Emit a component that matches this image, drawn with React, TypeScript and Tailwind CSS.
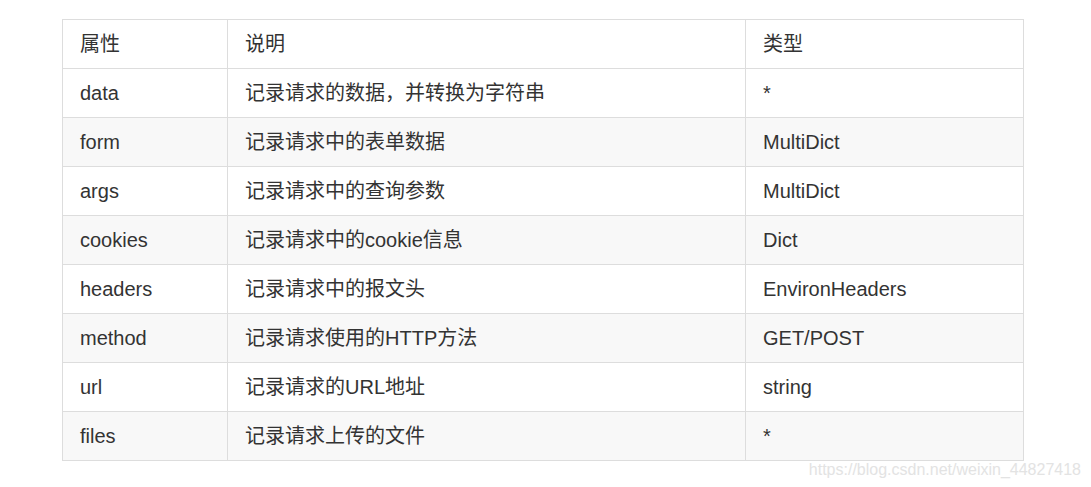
const rows: [string, string, string][] = [
  ['data', '记录请求的数据，并转换为字符串', '*'],
  ['form', '记录请求中的表单数据', 'MultiDict'],
  ['args', '记录请求中的查询参数', 'MultiDict'],
  ['cookies', '记录请求中的cookie信息', 'Dict'],
  ['headers', '记录请求中的报文头', 'EnvironHeaders'],
  ['method', '记录请求使用的HTTP方法', 'GET/POST'],
  ['url', '记录请求的URL地址', 'string'],
  ['files', '记录请求上传的文件', '*'],
];

const cell = 'border border-[#dddddd] pl-[17px] pr-4 h-[49px] py-0 align-middle font-normal text-left';

export default function App() {
  return (
    <div
      className="w-[1091px] h-[487px] bg-white pl-[62px] pt-[19px] text-[20px] text-[#333333] relative"
      style={{ fontFamily: '"Liberation Sans", "Noto Sans CJK SC", sans-serif' }}
    >
      <table className="border-collapse table-fixed w-[961px]">
        <colgroup>
          <col className="w-[165px]" />
          <col className="w-[518px]" />
          <col className="w-[278px]" />
        </colgroup>
        <thead>
          <tr>
            <th className={cell}>属性</th>
            <th className={cell}>说明</th>
            <th className={cell}>类型</th>
          </tr>
        </thead>
        <tbody>
          {rows.map(([name, desc, type], i) => (
            <tr key={name} className={i % 2 === 1 ? 'bg-[#f8f8f8]' : 'bg-white'}>
              <td className={cell}>{name}</td>
              <td className={cell}>{desc}</td>
              <td className={cell}>{type}</td>
            </tr>
          ))}
        </tbody>
      </table>
      <div className="absolute right-[10px] top-[458px] text-[16px] text-[#e3e3e3]">
        https://blog.csdn.net/weixin_44827418
      </div>
    </div>
  );
}
